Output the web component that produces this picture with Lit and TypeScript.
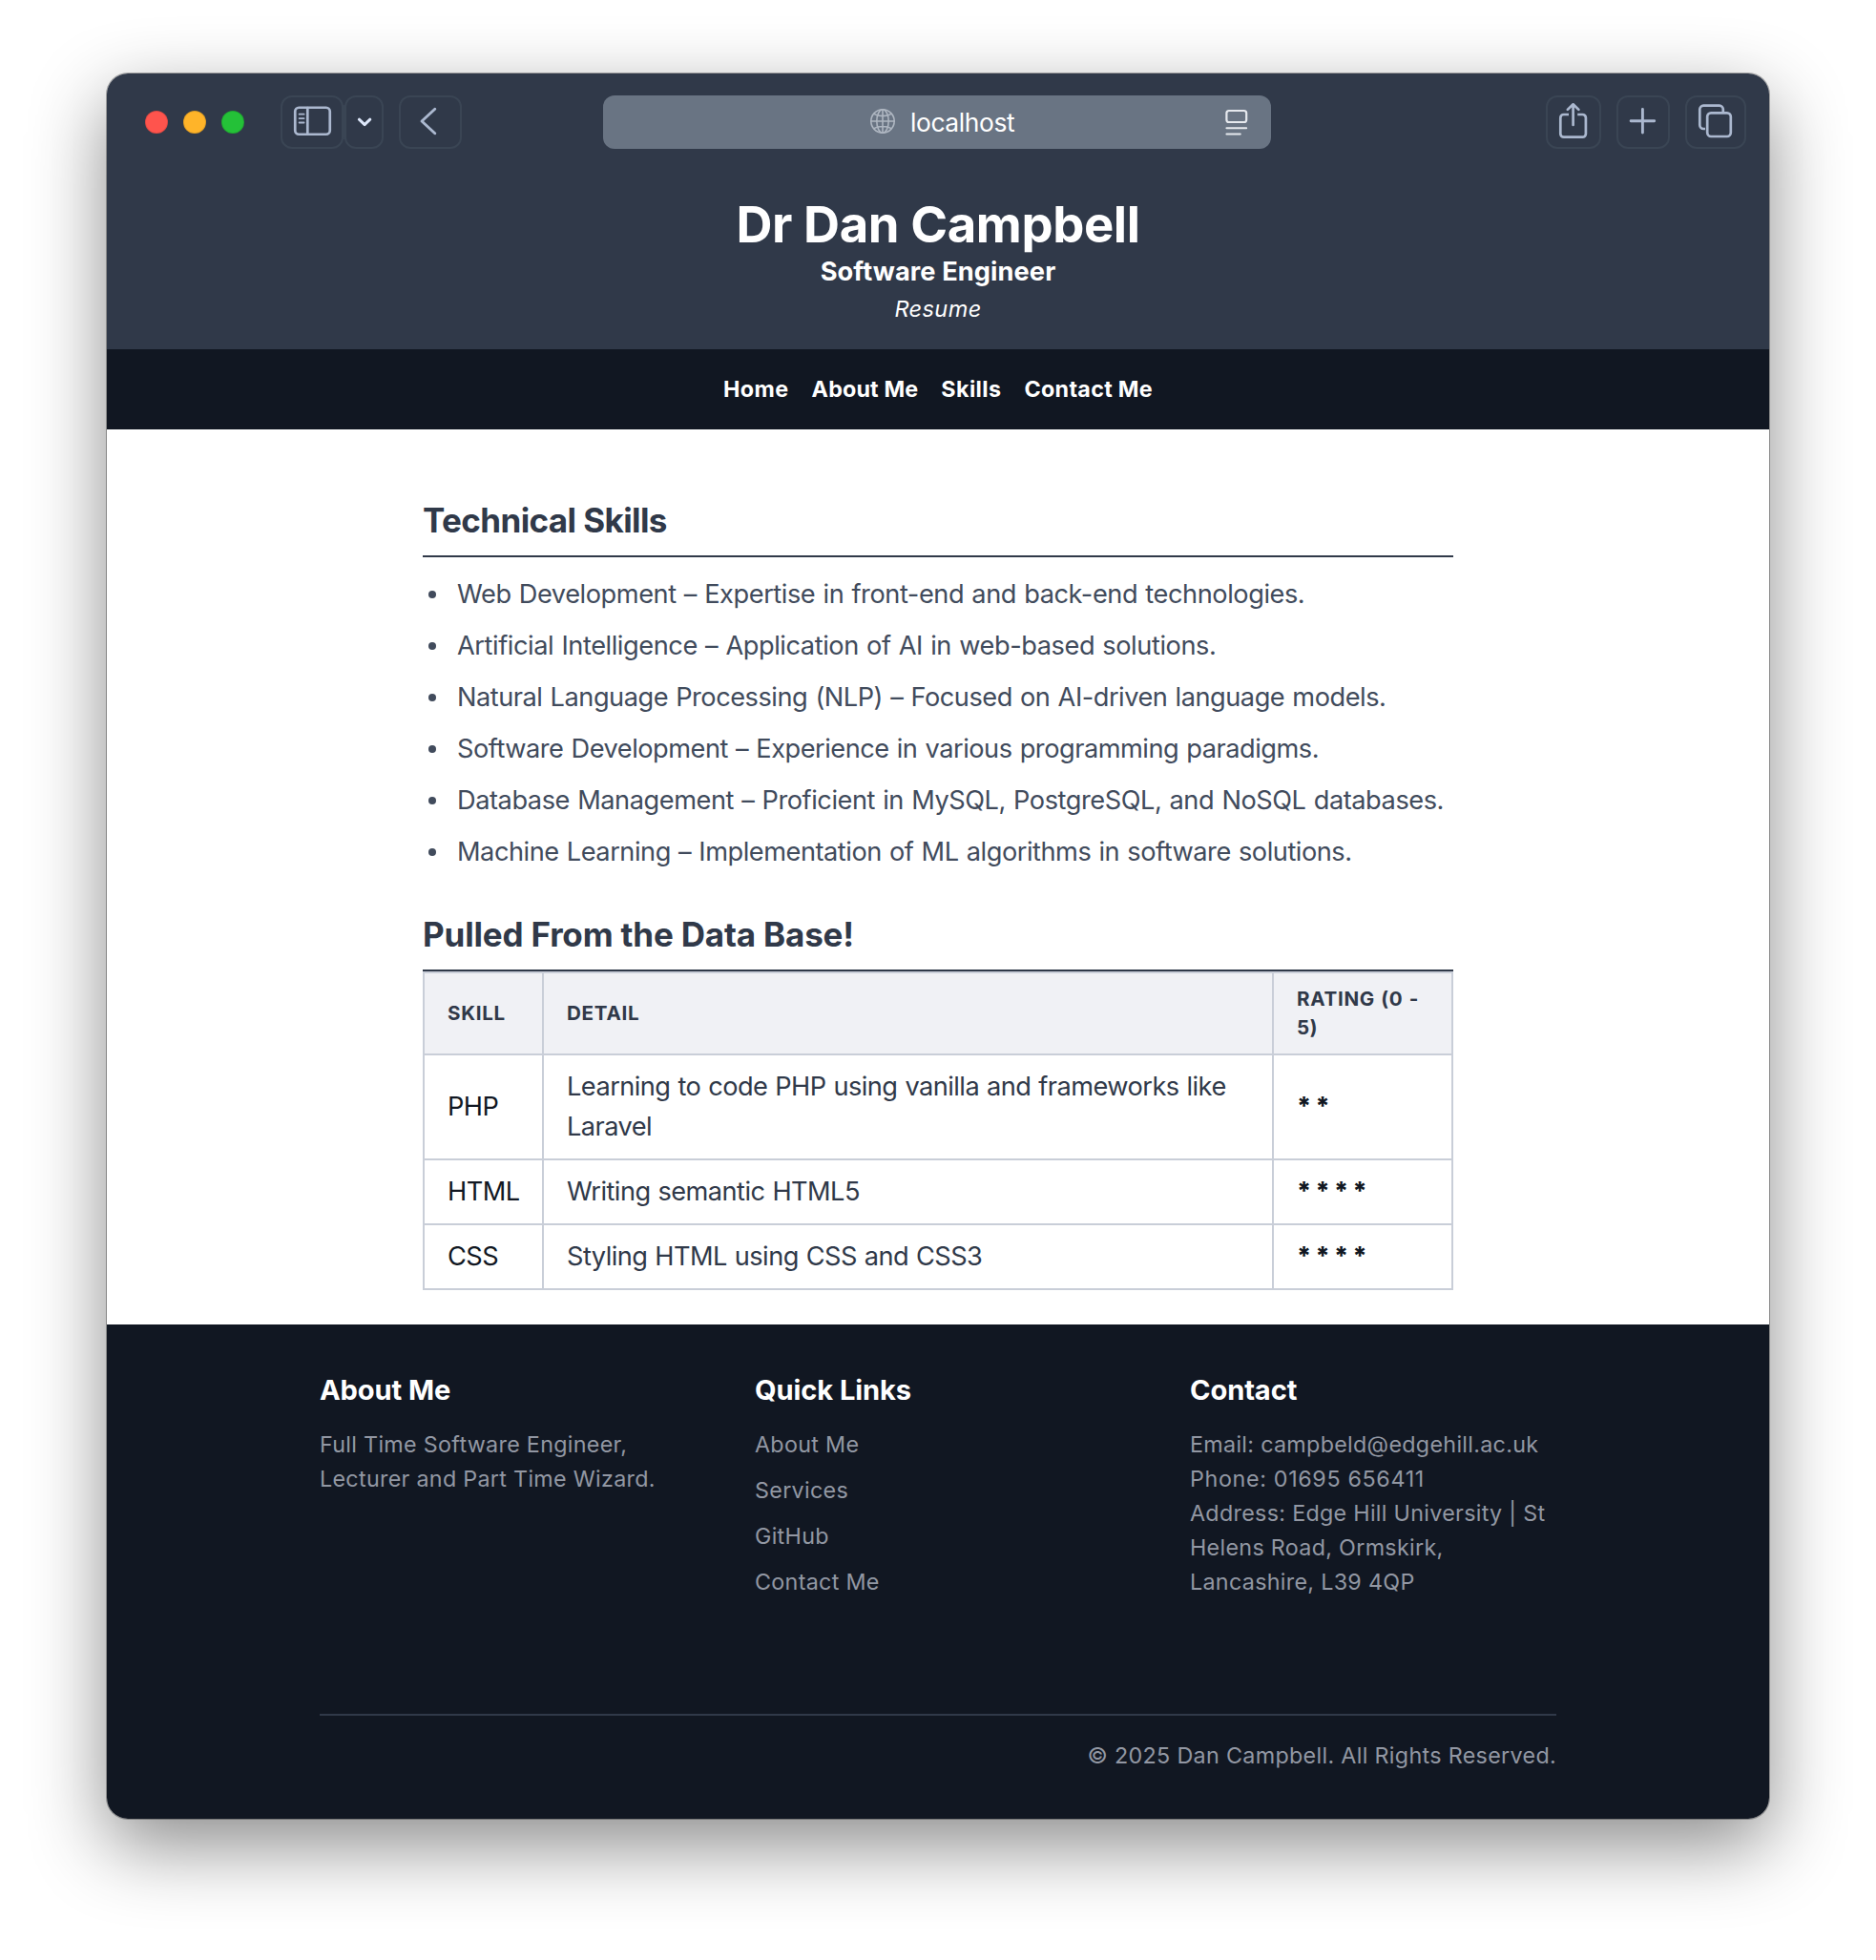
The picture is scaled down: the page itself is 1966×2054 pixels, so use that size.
import { LitElement, html, css } from "lit";
import { customElement } from "lit/decorators.js";

type Tracked = { text: string; ls: number };

const nav: Tracked[] = [
  { text: "Home", ls: 0.45 },
  { text: "About Me", ls: 0.15 },
  { text: "Skills", ls: 0.4 },
  { text: "Contact Me", ls: 0.3 },
];

const skills: Tracked[] = [
  { text: "Web Development – Expertise in front-end and back-end technologies.", ls: -0.44 },
  { text: "Artificial Intelligence – Application of AI in web-based solutions.", ls: -0.43 },
  { text: "Natural Language Processing (NLP) – Focused on AI-driven language models.", ls: -0.48 },
  { text: "Software Development – Experience in various programming paradigms.", ls: -0.49 },
  { text: "Database Management – Proficient in MySQL, PostgreSQL, and NoSQL databases.", ls: -0.45 },
  { text: "Machine Learning – Implementation of ML algorithms in software solutions.", ls: -0.47 },
];

const ratings = [
  { skill: "PHP", detail: "Learning to code PHP using vanilla and frameworks like Laravel", stars: 2 },
  { skill: "HTML", detail: "Writing semantic HTML5", stars: 4 },
  { skill: "CSS", detail: "Styling HTML using CSS and CSS3", stars: 4 },
];

const links = ["About Me", "Services", "GitHub", "Contact Me"];

@customElement("browser-toolbar")
export class BrowserToolbar extends LitElement {
  static styles = css`
    :host {
      display: grid;
      grid-template-columns: 520px 700px 1fr;
      align-items: start;
      height: 104px;
      padding-top: 23px;
      box-sizing: border-box;
    }
    .left {
      display: flex;
      align-items: center;
      height: 56px;
      padding-left: 40px;
    }
    .lights {
      display: flex;
      gap: 16px;
      margin-right: 38px;
    }
    .light {
      width: 24px;
      height: 24px;
      border-radius: 50%;
      box-sizing: border-box;
      border: 1px solid rgba(0, 0, 0, 0.12);
    }
    .red { background: #ff544d; }
    .amber { background: #ffb429; }
    .green { background: #24c138; }
    .btn {
      height: 56px;
      box-sizing: border-box;
      border: 2px solid #3a4554;
      border-radius: 12px;
    }
    .btn svg {
      display: block;
      margin: -2px;
      overflow: visible;
      fill: none;
      stroke: #abb8cf;
      stroke-width: 2.7;
      stroke-linecap: round;
      stroke-linejoin: round;
    }
    .btn .bright { stroke: #dde7fa; stroke-width: 3; }
    .w66 { width: 66px; }
    .w41 { width: 41px; }
    .w58 { width: 58px; }
    .w56 { width: 56px; }
    .w64 { width: 64px; }
    .split {
      width: 2px;
      height: 36px;
      margin-right: -1px;
      background: #3a4554;
    }
    .back { margin-left: 16px; }
    .url {
      display: flex;
      align-items: center;
      height: 56px;
      border-radius: 12px;
      background: #697483;
      color: #fff;
      font-size: 26.4px;
      letter-spacing: -0.4px;
      box-sizing: border-box;
      padding: 0 24px 0 279px;
    }
    .url .globe { margin: -2px 15px 0 0; }
    .url .reader { margin-left: auto; }
    .url svg { display: block; fill: none; stroke-linecap: round; }
    .right {
      display: flex;
      justify-content: flex-end;
      gap: 16px;
      padding-right: 24px;
    }
  `;

  render() {
    return html`
      <div class="left">
        <div class="lights">
          <span class="light red"></span><span class="light amber"></span><span class="light green"></span>
        </div>
        <div class="btn w66">
          <svg width="66" height="56" viewBox="0 0 66 56">
            <rect x="15.25" y="12.75" width="36.5" height="28" rx="4" />
            <path d="M28.3 13V40.5" />
            <path stroke-width="1.8" d="M19.6 19.7h5M19.6 24.1h5M19.6 28.5h5" />
          </svg>
        </div>
        <div class="split"></div>
        <div class="btn w41">
          <svg width="41" height="56" viewBox="0 0 41 56">
            <path class="bright" d="M15.4 25.2l5.7 5.4l5.7-5.4" />
          </svg>
        </div>
        <div class="btn w66 back">
          <svg width="66" height="56" viewBox="0 0 66 56">
            <path stroke-width="2.9" d="M37.8 14.2L24 27L37.8 39.8" />
          </svg>
        </div>
      </div>
      <div class="url">
        <svg class="globe" width="28" height="28" viewBox="0 0 28 28" stroke="#aeb6c1" stroke-width="1.6">
          <circle cx="14" cy="14" r="12.2" />
          <ellipse cx="14" cy="14" rx="6.2" ry="12.2" />
          <path d="M14 1.8v24.4M1.8 14h24.4M4.8 6.4c5 2.9 13.4 2.9 18.4 0M4.8 21.6c5-2.9 13.4-2.9 18.4 0" />
        </svg>
        <span>localhost</span>
        <svg class="reader" width="24" height="30" viewBox="0 0 24 30" stroke="#e6e9ee" stroke-width="2.2">
          <rect x="1.4" y="3" width="20.8" height="12" rx="2.6" />
          <path stroke-width="2" d="M1.4 21.2h20.8M1.4 27.6h14.4" />
        </svg>
      </div>
      <div class="right">
        <div class="btn w58">
          <svg width="58" height="56" viewBox="0 0 58 56">
            <path d="M24 20h-5.2a3.5 3.5 0 0 0-3.5 3.5v16.7a3.5 3.5 0 0 0 3.5 3.5h19.6a3.5 3.5 0 0 0 3.5-3.5V23.5a3.5 3.5 0 0 0-3.5-3.5h-5.2" stroke-linecap="butt" />
            <path d="M28.6 31V9.5M22.8 14.9l5.8-5.6l5.8 5.6" />
          </svg>
        </div>
        <div class="btn w56">
          <svg width="56" height="56" viewBox="0 0 56 56">
            <path stroke-width="2.9" d="M27.4 14.4v24.6M15.1 26.7h24.6" />
          </svg>
        </div>
        <div class="btn w64">
          <svg width="64" height="56" viewBox="0 0 64 56">
            <path d="M21 35h-1.8a3.9 3.9 0 0 1-3.9-3.9V14.6a3.9 3.9 0 0 1 3.9-3.9h16.7a3.9 3.9 0 0 1 3.9 3.9v2.4" stroke-linecap="butt" />
            <rect x="23.2" y="18.4" width="24.6" height="24.6" rx="3.9" />
          </svg>
        </div>
      </div>
    `;
  }
}

@customElement("app-root")
export class AppRoot extends LitElement {
  static styles = css`
    :host {
      display: block;
      box-sizing: border-box;
      width: 1966px;
      height: 2054px;
      padding: 77px 112px 0;
      overflow: hidden;
      background: #fff;
      font-family: Inter, "Liberation Sans", sans-serif;
    }
    .window {
      width: 1742px;
      height: 1829px;
      border-radius: 22px;
      background: #fff;
      box-shadow: 0 0 0 1px rgba(0, 0, 0, 0.3), 0 28px 80px rgba(0, 0, 0, 0.46);
    }
    .clip {
      height: 100%;
      border-radius: inherit;
      overflow: hidden;
      display: flex;
      flex-direction: column;
    }
    .top { background: #303949; color: #fff; height: 289px; }
    .banner { text-align: center; padding-top: 24px; }
    h1, h2, h3, p, ul { margin: 0; padding: 0; }
    h1 { font-size: 52.6px; line-height: 60px; letter-spacing: -0.4px; font-weight: 700; }
    .role { font-size: 27.2px; line-height: 40px; font-weight: 700; letter-spacing: 0.1px; }
    .kind { font-size: 23.5px; line-height: 37px; font-style: italic; letter-spacing: 0.4px; }
    nav {
      display: flex;
      justify-content: center;
      gap: 24px;
      height: 84px;
      background: #111722;
      color: #fff;
      font-size: 23.3px;
      font-weight: 700;
      line-height: 83px;
    }
    main {
      width: 1080px;
      height: 938px;
      box-sizing: border-box;
      margin: 0 auto;
      padding-top: 75px;
      color: #303949;
    }
    h2 {
      font-size: 35px;
      line-height: 40px;
      font-weight: 700;
      padding-bottom: 17px;
      border-bottom: 2px solid #303949;
    }
    .h-tech { letter-spacing: -0.6px; }
    .h-data { letter-spacing: -0.17px; margin-top: 45px; }
    .skills {
      list-style: none;
      display: grid;
      gap: 12px;
      margin-top: 18px;
      font-size: 27.2px;
      line-height: 42px;
      word-spacing: 1px;
      color: #414b5c;
    }
    .skills li { display: flex; align-items: center; white-space: pre; }
    .dot {
      width: 8px;
      height: 8px;
      border-radius: 50%;
      background: #414b5c;
      margin: 0 22px 0 6px;
    }
    table {
      width: 1080px;
      table-layout: fixed;
      border-collapse: collapse;
      font-size: 27.2px;
      line-height: 42px;
      letter-spacing: -0.54px;
      word-spacing: 0.8px;
    }
    .c1 { width: 125px; }
    .c2 { width: 765px; }
    .c3 { width: 188px; }
    th, td { border: 2px solid #c9ced8; text-align: left; padding: 0 22px 0 24px; }
    th {
      height: 84px;
      box-sizing: border-box;
      background: #f0f1f5;
      font-size: 20.6px;
      line-height: 30px;
      font-weight: 700;
      letter-spacing: 0.7px;
    }
    tr.head { height: 86px; }
    tr.tall { height: 110px; }
    tr.row { height: 68px; }
    .name { color: #111722; }
    .stars {
      color: #111722;
      font-size: 26px;
      font-weight: 800;
      letter-spacing: -0.8px;
      word-spacing: 0.3px;
      padding-bottom: 2px;
    }
    footer {
      flex: 1;
      background: #111722;
      color: #9297a3;
      padding: 48px 223px 0;
      font-size: 23.3px;
      line-height: 36px;
      letter-spacing: 0.3px;
    }
    .cols { display: grid; grid-template-columns: repeat(3, 384px); gap: 72px; height: 360px; box-sizing: border-box; }
    h3 { color: #fff; font-size: 29.1px; line-height: 42px; font-weight: 700; letter-spacing: -0.1px; margin-bottom: 18px; }
    .links { list-style: none; display: grid; gap: 12px; }
    .phone { letter-spacing: 0.65px; }
    .copy { border-top: 2px solid #303949; padding-top: 24px; text-align: right; letter-spacing: 0.32px; }
  `;

  render() {
    const tracked = (t: Tracked) => html`<span style="letter-spacing:${t.ls}px">${t.text}</span>`;
    return html`
      <div class="window">
        <div class="clip">
          <div class="top">
            <browser-toolbar></browser-toolbar>
            <header class="banner">
              <h1>Dr Dan Campbell</h1>
              <p class="role">Software Engineer</p>
              <p class="kind">Resume</p>
            </header>
          </div>
          <nav>${nav.map(tracked)}</nav>
          <main>
            <h2 class="h-tech">Technical Skills</h2>
            <ul class="skills">
              ${skills.map((s) => html`<li><span class="dot"></span>${tracked(s)}</li>`)}
            </ul>
            <h2 class="h-data">Pulled From the Data Base!</h2>
            <table>
              <colgroup><col class="c1" /><col class="c2" /><col class="c3" /></colgroup>
              <tr class="head"><th>SKILL</th><th>DETAIL</th><th>RATING (0 - 5)</th></tr>
              ${ratings.map(
                (r, i) => html`<tr class=${i === 0 ? "tall" : "row"}>
                  <td class="name">${r.skill}</td>
                  <td>${r.detail}</td>
                  <td class="stars">${Array(r.stars).fill("*").join(" ")}</td>
                </tr>`
              )}
            </table>
          </main>
          <footer>
            <div class="cols">
              <section>
                <h3>About Me</h3>
                <p>Full Time Software Engineer, Lecturer and Part Time Wizard.</p>
              </section>
              <section>
                <h3>Quick Links</h3>
                <ul class="links">${links.map((l) => html`<li>${l}</li>`)}</ul>
              </section>
              <section>
                <h3>Contact</h3>
                <p>Email: campbeld@edgehill.ac.uk</p>
                <p class="phone">Phone: 01695 656411</p>
                <p>Address: Edge Hill University | St Helens Road, Ormskirk, Lancashire, L39 4QP</p>
              </section>
            </div>
            <p class="copy">© 2025 Dan Campbell. All Rights Reserved.</p>
          </footer>
        </div>
      </div>
    `;
  }
}
